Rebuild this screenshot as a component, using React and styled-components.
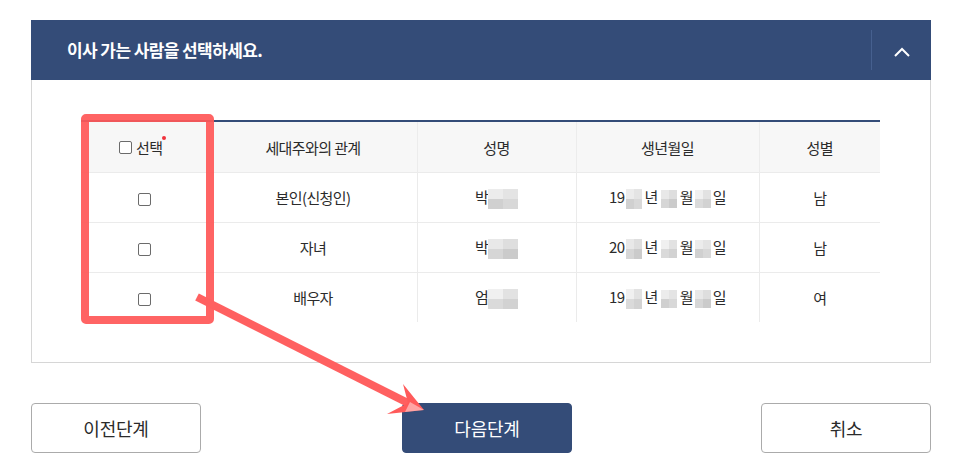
import styled, { createGlobalStyle } from "styled-components";

const GlobalStyle = createGlobalStyle`
  html, body {
    margin: 0;
    padding: 0;
    background: #fff;
  }
  body {
    font-family: "Noto Sans CJK KR", "Noto Sans", sans-serif;
    color: #333;
  }
`

const Page = styled.div`
  position: relative;
  width: 959px;
  height: 476px;
  padding: 20px 0 0 31px;
  box-sizing: border-box;
`

const Panel = styled.section`
  width: 900px;
`

const PanelHeader = styled.header`
  display: flex;
  align-items: center;
  height: 60px;
  background: #344c78;
  color: #fff;
`

const Title = styled.h2`
  flex: 1;
  margin: 0;
  padding-left: 36px;
  font-size: 17px;
  font-weight: 700;
  letter-spacing: -0.6px;
  line-height: 20px;
`

const ToggleButton = styled.button`
  display: flex;
  align-items: center;
  justify-content: center;
  width: 60px;
  height: 40px;
  padding: 4px 0 0;
  border: 0;
  border-left: 1px solid #46608f;
  background: transparent;
  cursor: pointer;
`

const PanelBody = styled.div`
  padding: 40px 49px 40px 49px;
  border: 1px solid #d6d6d6;
  border-top: 0;
`

const Table = styled.table`
  width: 799px;
  border-collapse: collapse;
  table-layout: fixed;
  border-top: 2px solid #344c78;
  font-size: 15px;
  letter-spacing: -0.6px;
`

const Th = styled.th`
  height: 50px;
  padding: 0;
  background: #f7f7f7;
  font-weight: 400;
  color: #2b2b2b;
  border-left: 1px solid #ececec;
  &:first-child { border-left: 0; }
`

const Td = styled.td`
  height: 49px;
  padding: 0;
  text-align: center;
  color: #2b2b2b;
  border-top: 1px solid #ebebeb;
  border-left: 1px solid #ebebeb;
  &:first-child { border-left: 0; }
`

const CheckBox = styled.input.attrs({ type: "checkbox" })`
  appearance: none;
  width: 13px;
  height: 13px;
  margin: 0;
  border: 1px solid #6b6b6b;
  border-radius: 2px;
  background: #fff;
  vertical-align: middle;
`

const SelectLabel = styled.span`
  display: inline-flex;
  align-items: center;
  gap: 4px;
  margin-right: 8px;
  position: relative;
`

const RequiredDot = styled.i`
  position: absolute;
  right: -4px;
  top: -1px;
  width: 4px;
  height: 4px;
  border-radius: 50%;
  background: #f0323c;
`

const Mosaic = styled.span`
  display: inline-grid;
  grid-template-columns: 1fr 1fr;
  grid-template-rows: 1fr 1fr;
  width: ${p => p.$w}px;
  height: ${p => p.$h}px;
  margin: 0 ${p => p.$gap || 0}px;
  vertical-align: middle;
`

const Cell = styled.span`
  background: ${p => p.$c};
`

const Actions = styled.div`
  display: flex;
  justify-content: space-between;
  align-items: center;
  width: 900px;
  margin-top: 40px;
`

const Button = styled.button`
  width: 170px;
  height: 50px;
  border-radius: 4px;
  border: 1px solid ${p => (p.$primary ? "#344c78" : "#ababab")};
  background: ${p => (p.$primary ? "#344c78" : "#fff")};
  color: ${p => (p.$primary ? "#fff" : "#2b2b2b")};
  font-family: inherit;
  font-size: 18px;
  letter-spacing: -0.2px;
  cursor: pointer;
  margin-left: ${p => p.$shift || 0}px;
`

const Highlight = styled.div`
  position: absolute;
  left: 81px;
  top: 114px;
  width: 133px;
  height: 210px;
  box-sizing: border-box;
  border: 8px solid rgba(255, 88, 88, 0.93);
  border-radius: 5px;
  pointer-events: none;
`

const ArrowLayer = styled.svg`
  position: absolute;
  left: 0;
  top: 0;
  pointer-events: none;
`

const shades = [
  ["#ececec", "#e4e4e4", "#d0d0d0", "#d8d8d8"],
  ["#e8e8e8", "#dedede", "#d6d6d6", "#cbcbcb"],
  ["#f0f0f0", "#e2e2e2", "#dadada", "#d2d2d2"],
]

function Blur({ w, h, gap, tone = 0 }) {
  return (
    <Mosaic $w={w} $h={h} $gap={gap}>
      {shades[tone].map((c, i) => <Cell key={i} $c={c} />)}
    </Mosaic>
  )
}

const people = [
  { rel: "본인(신청인)", name: "박", year: "19", sex: "남" },
  { rel: "자녀", name: "박", year: "20", sex: "남" },
  { rel: "배우자", name: "엄", year: "19", sex: "여" },
]

function ChevronUp() {
  return (
    <svg width="16" height="10" viewBox="0 0 16 10">
      <polyline points="1,9 8,2 15,9" fill="none" stroke="#fff" strokeWidth="2" />
    </svg>
  )
}

export default function App() {
  return (
    <Page>
      <GlobalStyle />
      <Panel>
        <PanelHeader>
          <Title>이사 가는 사람을 선택하세요.</Title>
          <ToggleButton aria-label="접기"><ChevronUp /></ToggleButton>
        </PanelHeader>
        <PanelBody>
          <Table>
            <colgroup>
              <col style={{ width: 128 }} />
              <col style={{ width: 208 }} />
              <col style={{ width: 159 }} />
              <col style={{ width: 183 }} />
              <col style={{ width: 121 }} />
            </colgroup>
            <thead>
              <tr>
                <Th>
                  <SelectLabel>
                    <CheckBox aria-label="전체 선택" />
                    선택
                    <RequiredDot />
                  </SelectLabel>
                </Th>
                <Th>세대주와의 관계</Th>
                <Th>성명</Th>
                <Th>생년월일</Th>
                <Th>성별</Th>
              </tr>
            </thead>
            <tbody>
              {people.map((p, i) => (
                <tr key={i}>
                  <Td><CheckBox /></Td>
                  <Td>{p.rel}</Td>
                  <Td>{p.name}<Blur w={30} h={20} tone={i} /></Td>
                  <Td>
                    {p.year}<Blur w={16} h={20} gap={2} tone={i} />년
                    <Blur w={16} h={18} gap={3} tone={(i + 1) % 3} />월
                    <Blur w={16} h={18} gap={2} tone={(i + 2) % 3} />일
                  </Td>
                  <Td>{p.sex}</Td>
                </tr>
              ))}
            </tbody>
          </Table>
        </PanelBody>
      </Panel>
      <Actions>
        <Button>이전단계</Button>
        <Button $primary $shift={12}>다음단계</Button>
        <Button>취소</Button>
      </Actions>

      <Highlight />
      <ArrowLayer width="959" height="476" viewBox="0 0 959 476">
        <line x1="197" y1="297" x2="410" y2="404" stroke="#ff6060" strokeWidth="8" />
        <polygon points="424,410 403,384 408,403 387,414" fill="#ff5a5a" />
        <polygon points="410,402 424,410 405,412" fill="rgba(255,255,255,0.45)" />
      </ArrowLayer>
    </Page>
  )
}
